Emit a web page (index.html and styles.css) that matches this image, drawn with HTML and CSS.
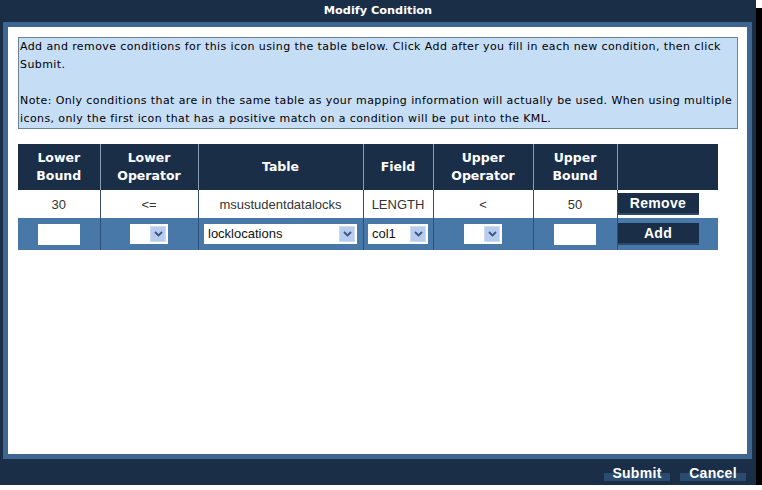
FILE: index.html
```html
<!DOCTYPE html>
<html>
<head>
<meta charset="utf-8">
<link rel="stylesheet" href="styles.css">
</head>
<body>
<div class="dialog">
  <div class="title">Modify Condition</div>
  <div class="frame">
    <div class="info">Add and remove conditions for this icon using the table below. Click Add after you fill in each new condition, then click Submit.<br><br>Note: Only conditions that are in the same table as your mapping information will actually be used. When using multiple icons, only the first icon that has a positive match on a condition will be put into the KML.</div>
    <table class="cond">
      <colgroup>
        <col class="c1"><col class="c2"><col class="c3"><col class="c4"><col class="c5"><col class="c6"><col class="c7">
      </colgroup>
      <thead>
        <tr>
          <th>Lower<br>Bound</th>
          <th>Lower<br>Operator</th>
          <th>Table</th>
          <th>Field</th>
          <th>Upper<br>Operator</th>
          <th>Upper<br>Bound</th>
          <th></th>
        </tr>
      </thead>
      <tbody>
        <tr class="data">
          <td>30</td>
          <td>&lt;=</td>
          <td>msustudentdatalocks</td>
          <td>LENGTH</td>
          <td>&lt;</td>
          <td>50</td>
          <td class="btncell"><button class="rowbtn">Remove</button></td>
        </tr>
        <tr class="entry">
          <td><input class="txt" type="text"></td>
          <td><span class="sel w38"><span class="val"></span><span class="arr"><svg width="9" height="6" viewBox="0 0 9 6"><path d="M1 1 L4.5 4.5 L8 1" fill="none" stroke="#3c5582" stroke-width="1.8"/></svg></span></span></td>
          <td><span class="sel w153"><span class="val">locklocations</span><span class="arr"><svg width="9" height="6" viewBox="0 0 9 6"><path d="M1 1 L4.5 4.5 L8 1" fill="none" stroke="#3c5582" stroke-width="1.8"/></svg></span></span></td>
          <td><span class="sel w60"><span class="val">col1</span><span class="arr"><svg width="9" height="6" viewBox="0 0 9 6"><path d="M1 1 L4.5 4.5 L8 1" fill="none" stroke="#3c5582" stroke-width="1.8"/></svg></span></span></td>
          <td><span class="sel w38"><span class="val"></span><span class="arr"><svg width="9" height="6" viewBox="0 0 9 6"><path d="M1 1 L4.5 4.5 L8 1" fill="none" stroke="#3c5582" stroke-width="1.8"/></svg></span></span></td>
          <td><input class="txt" type="text"></td>
          <td class="btncell"><button class="rowbtn">Add</button></td>
        </tr>
      </tbody>
    </table>
  </div>
  <div class="footer">
    <button class="fbtn">Submit</button>
    <button class="fbtn">Cancel</button>
  </div>
</div>
</body>
</html>
```
FILE: styles.css
```css
html, body {
  margin: 0;
  padding: 0;
  background: #ffffff;
}
.dialog {
  width: 756px;
  height: 485px;
  background: #1b2e48;
  box-shadow: 8px 8px 0 #000000;
  display: flex;
  flex-direction: column;
}
.title {
  flex: none;
  height: 22px;
  line-height: 22px;
  text-align: center;
  color: #ffffff;
  font-family: "DejaVu Sans", Verdana, sans-serif;
  font-weight: bold;
  font-size: 11.3px;
}
.frame {
  flex: none;
  margin: 0 4px 0 3px;
  border: 5px solid #3e6690;
  background: #ffffff;
  height: 407px;
  padding: 10px;
  box-sizing: content-box;
  width: 719px;
}
.info {
  box-sizing: border-box;
  width: 720px;
  background: #c6ddf6;
  border: 1px solid #6d8197;
  padding: 0 1px;
  font-family: "DejaVu Sans", Verdana, sans-serif;
  font-size: 11px;
  letter-spacing: 0.4px;
  line-height: 18px;
  color: #000000;
}
.cond {
  margin-top: 15px;
  width: 700px;
  table-layout: fixed;
  border-collapse: collapse;
}
.c1 { width: 82px; }
.c2 { width: 98px; }
.c3 { width: 165px; }
.c4 { width: 70px; }
.c5 { width: 100px; }
.c6 { width: 84px; }
.c7 { width: 101px; }
.cond th {
  background: #1b2e48;
  color: #ffffff;
  font-family: "DejaVu Sans", Verdana, sans-serif;
  font-weight: bold;
  font-size: 12.5px;
  line-height: 18px;
  height: 46px;
  padding: 0;
  border-left: 1px solid #8b9bb0;
  text-align: center;
  vertical-align: middle;
}
.cond th:first-child { border-left: none; }
.cond td {
  padding: 0;
  text-align: center;
  vertical-align: middle;
  font-family: "Liberation Sans", Arial, sans-serif;
  font-size: 13px;
  color: #333333;
}
.data td {
  height: 28px;
  background: #ffffff;
  border-left: 1px solid #3a4c63;
}
.data td:first-child, .entry td:first-child { border-left: none; }
.entry td {
  height: 32px;
  background: #4878a8;
  border-left: 1px solid #2c527b;
}
.cond td.btncell {
  text-align: left;
}
.rowbtn {
  display: block;
  width: 81px;
  height: 22px;
  margin: 0;
  padding: 0;
  border: none;
  border-bottom: 2px solid #2c4a6c;
  background: #1b2e48;
  color: #ffffff;
  font-family: "Liberation Sans", Arial, sans-serif;
  font-weight: bold;
  font-size: 14px;
  letter-spacing: 0.3px;
}
.txt {
  box-sizing: border-box;
  width: 42px;
  height: 21px;
  border: none;
  margin: 0;
  padding: 0;
  background: #ffffff;
  vertical-align: middle;
}
.sel {
  box-sizing: border-box;
  display: inline-flex;
  align-items: center;
  height: 20px;
  background: #ffffff;
  padding: 0 2px 0 4px;
  vertical-align: middle;
  text-align: left;
}
.w38 { width: 38px; }
.w60 { width: 60px; }
.w153 { width: 153px; }
.val {
  flex: 1;
  font-family: "Liberation Sans", Arial, sans-serif;
  font-size: 13px;
  color: #111111;
  line-height: 20px;
  white-space: nowrap;
  overflow: hidden;
}
.arr {
  box-sizing: border-box;
  width: 16px;
  height: 16px;
  background: #b7ccef;
  border: 1px solid #cddcf5;
  display: flex;
  align-items: center;
  justify-content: center;
}
.footer {
  flex: 1;
  display: flex;
  justify-content: flex-end;
  align-items: flex-start;
  gap: 10px;
  padding: 6px 10px 0 0;
}
.fbtn {
  width: 66px;
  height: 16px;
  margin: 0;
  padding: 0;
  border: none;
  background: linear-gradient(to bottom, transparent 0, transparent 50%, #2a4a6e 50%, #2a4a6e 100%);
  color: #ffffff;
  font-family: "Liberation Sans", Arial, sans-serif;
  font-weight: bold;
  font-size: 14px;
  line-height: 16px;
  letter-spacing: 0.3px;
}
```
